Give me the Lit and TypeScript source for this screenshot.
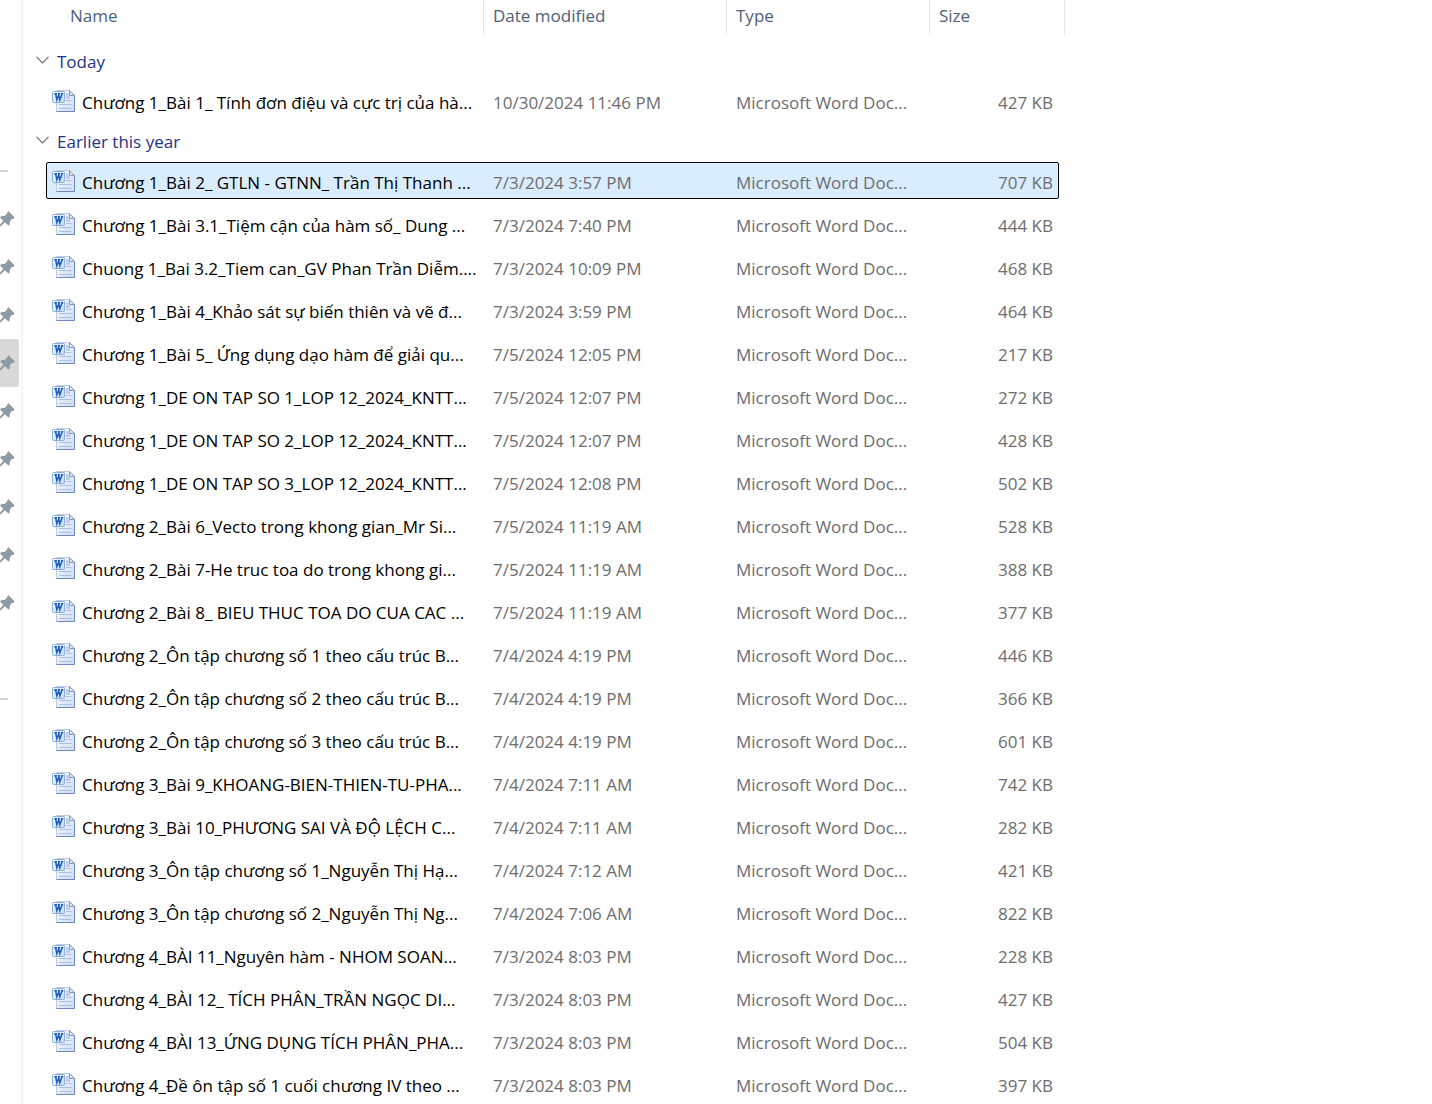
import { LitElement, html, css, svg } from "lit";
import { customElement, property, state } from "lit/decorators.js";
import { classMap } from "lit/directives/class-map.js";

interface FileItem {
  name: string;
  modified: string;
  size: string;
}

interface FileGroup {
  label: string;
  files: FileItem[];
}

const file = (name: string, modified: string, size: string): FileItem => ({ name, modified, size });

const GROUPS: FileGroup[] = [
  {
    label: "Today",
    files: [file("Chương 1_Bài 1_ Tính đơn điệu và cực trị của hà...", "10/30/2024 11:46 PM", "427 KB")],
  },
  {
    label: "Earlier this year",
    files: [
      file("Chương 1_Bài 2_ GTLN - GTNN_ Trần Thị Thanh ...", "7/3/2024 3:57 PM", "707 KB"),
      file("Chương 1_Bài 3.1_Tiệm cận của hàm số_ Dung ...", "7/3/2024 7:40 PM", "444 KB"),
      file("Chuong 1_Bai 3.2_Tiem can_GV Phan Trần Diễm....", "7/3/2024 10:09 PM", "468 KB"),
      file("Chương 1_Bài 4_Khảo sát sự biến thiên và vẽ đ...", "7/3/2024 3:59 PM", "464 KB"),
      file("Chương 1_Bài 5_ Ứng dụng dạo hàm để giải qu...", "7/5/2024 12:05 PM", "217 KB"),
      file("Chương 1_DE ON TAP SO 1_LOP 12_2024_KNTT...", "7/5/2024 12:07 PM", "272 KB"),
      file("Chương 1_DE ON TAP SO 2_LOP 12_2024_KNTT...", "7/5/2024 12:07 PM", "428 KB"),
      file("Chương 1_DE ON TAP SO 3_LOP 12_2024_KNTT...", "7/5/2024 12:08 PM", "502 KB"),
      file("Chương 2_Bài 6_Vecto trong khong gian_Mr Si...", "7/5/2024 11:19 AM", "528 KB"),
      file("Chương 2_Bài 7-He truc toa do trong khong gi...", "7/5/2024 11:19 AM", "388 KB"),
      file("Chương 2_Bài 8_ BIEU THUC TOA DO CUA CAC ...", "7/5/2024 11:19 AM", "377 KB"),
      file("Chương 2_Ôn tập chương số 1 theo cấu trúc B...", "7/4/2024 4:19 PM", "446 KB"),
      file("Chương 2_Ôn tập chương số 2 theo cấu trúc B...", "7/4/2024 4:19 PM", "366 KB"),
      file("Chương 2_Ôn tập chương số 3 theo cấu trúc B...", "7/4/2024 4:19 PM", "601 KB"),
      file("Chương 3_Bài 9_KHOANG-BIEN-THIEN-TU-PHA...", "7/4/2024 7:11 AM", "742 KB"),
      file("Chương 3_Bài 10_PHƯƠNG SAI VÀ ĐỘ LỆCH C...", "7/4/2024 7:11 AM", "282 KB"),
      file("Chương 3_Ôn tập chương số 1_Nguyễn Thị Hạ...", "7/4/2024 7:12 AM", "421 KB"),
      file("Chương 3_Ôn tập chương số 2_Nguyễn Thị Ng...", "7/4/2024 7:06 AM", "822 KB"),
      file("Chương 4_BÀI 11_Nguyên hàm - NHOM SOAN...", "7/3/2024 8:03 PM", "228 KB"),
      file("Chương 4_BÀI 12_ TÍCH PHÂN_TRẦN NGỌC DI...", "7/3/2024 8:03 PM", "427 KB"),
      file("Chương 4_BÀI 13_ỨNG DỤNG TÍCH PHÂN_PHA...", "7/3/2024 8:03 PM", "504 KB"),
      file("Chương 4_Đề ôn tập số 1 cuối chương IV theo ...", "7/3/2024 8:03 PM", "397 KB"),
    ],
  },
];

const PIN_COUNT = 9;

const pinShape = svg`
  <path d="M8.6 0.3 L14.8 6.4 L13.4 8 L12.2 7.8 L9.8 10.6 L9.8 13.2 L8.4 14.4 L4.9 11.2 L0.2 15.8 L-1 14.6 L3.4 9.8 L0 6.6 L1.6 5 L4.6 5 L7.2 2.6 L7.2 1.6 Z" fill="#8f9ba4"/>`;

const wordShape = svg`
  <defs>
    <linearGradient id="page" x1="0" y1="0" x2="1" y2="1">
      <stop offset="0" stop-color="#ffffff"/>
      <stop offset="1" stop-color="#cddaf2"/>
    </linearGradient>
    <linearGradient id="badge" x1="0" y1="0" x2="1" y2="1">
      <stop offset="0" stop-color="#ffffff"/>
      <stop offset="1" stop-color="#b9d8f8"/>
    </linearGradient>
  </defs>
  <path d="M4.5 0.5 H17.5 L22.5 5.5 V21.5 H4.5 Z" fill="url(#page)" stroke="#bccae2"/>
  <path d="M22.5 5.5 V21.5 H4.5" fill="none" stroke="#6c89bd"/>
  <path d="M17.5 0.5 V5.5 H22.5 Z" fill="#dbe5f4" stroke="#8398ba"/>
  <path d="M14 4.5 H16.5 M14 7.5 H18" stroke="#b4c9ea" stroke-width="2.4"/>
  <path d="M14 10.5 H19.5 M7 14.5 H19.5 M7 18.5 H19.5" stroke="#a9bfe4"/>
  <rect x="0.5" y="1.5" width="12" height="11" rx="1" fill="url(#badge)" stroke="#8fadd9"/>
  <path d="M2.2 3.8 H5.2 M6 3.8 H8 M9 3.8 H11.2 M3.7 4 L4.8 9.8 L6.8 4.6 L7.8 9.8 L10 4" fill="none" stroke="#1a5fbe" stroke-width="1.5"/>`;

@customElement("pinned-rail")
export class PinnedRail extends LitElement {
  @state() private current = 3;

  static styles = css`
    :host {
      display: block;
      box-sizing: border-box;
      width: 23px;
      flex: none;
      padding-top: 170px;
      border-right: 2px solid #f5f5f5;
    }
    .divider {
      width: 8px;
      height: 2px;
      margin: 0;
      border: 0;
      background: #d6d6d6;
    }
    .pins {
      margin: 23px 0 71px;
      padding: 0;
      list-style: none;
    }
    .pin {
      display: flex;
      align-items: center;
      width: 19px;
      height: 48px;
      padding: 0;
      border: 0;
      border-radius: 0 2px 2px 0;
      background: none;
    }
    .pin.current {
      background: #d9d9d9;
    }
    .glyph {
      display: block;
      width: 15px;
      height: 16px;
    }
  `;

  render() {
    return html`
      <hr class="divider" />
      <ul class="pins">
        ${Array.from(
          { length: PIN_COUNT },
          (_, i) => html`<li>
            <button
              class=${classMap({ pin: true, current: i === this.current })}
              aria-label="Pinned folder ${i + 1}"
              @click=${() => (this.current = i)}
            >
              <svg class="glyph" viewBox="0 0 15 16" aria-hidden="true">${pinShape}</svg>
            </button>
          </li>`
        )}
      </ul>
      <hr class="divider" />
    `;
  }
}

@customElement("file-list")
export class FileList extends LitElement {
  @property({ attribute: false }) groups: FileGroup[] = [];
  @state() private selected = "1-0";
  @state() private closed: number[] = [];

  static styles = css`
    :host {
      display: block;
      flex: 1;
      min-width: 0;
    }
    table,
    thead,
    tbody {
      display: block;
    }
    table {
      max-width: 1042px;
      color: #6d6d6d;
      font-size: 17px;
      line-height: 24px;
      white-space: nowrap;
    }
    tbody {
      cursor: default;
    }
    thead {
      margin-bottom: 4px;
    }
    th,
    td {
      box-sizing: border-box;
      min-width: 0;
      padding: 0;
      text-align: left;
      font-weight: 400;
    }
    .columns,
    .file {
      display: grid;
      grid-template-columns: 438fr 243fr 203fr 135fr;
    }
    .columns {
      height: 35px;
      margin-left: 23px;
      color: #4c607a;
    }
    .columns th {
      padding: 4px 0 0 9px;
      border-right: 1px solid #e5e5e5;
    }
    .columns .name {
      padding-left: 24px;
    }
    .group {
      display: block;
      height: 43px;
    }
    .group th {
      display: block;
    }
    .toggle {
      display: flex;
      align-items: center;
      gap: 8px;
      padding: 11px 0 8px 13px;
      border: 0;
      background: none;
      color: #1e3287;
      font: inherit;
    }
    .chevron {
      width: 13px;
      height: 8px;
      margin-bottom: 4px;
    }
    .chevron.closed {
      transform: rotate(-90deg);
    }
    .file {
      position: relative;
      height: 37px;
      margin: 0 0 6px 23px;
    }
    .file:last-child {
      margin-bottom: 0;
    }
    .file td {
      z-index: 1;
      padding: 9px 0 0 9px;
    }
    .file .name {
      display: flex;
      gap: 6px;
      padding: 8px 0 0 6px;
      color: #000;
      line-height: 26px;
    }
    .file .size {
      padding-right: 12px;
      text-align: right;
    }
    .file.selected::before {
      content: "";
      position: absolute;
      inset: 0 6px 0 0;
      border: 1px solid #000;
      border-radius: 2px;
      background: #d9edff;
    }
    .icon {
      flex: none;
      width: 24px;
      height: 22px;
    }
  `;

  private toggle(index: number) {
    this.closed = this.closed.includes(index)
      ? this.closed.filter((i) => i !== index)
      : [...this.closed, index];
  }

  private renderFile(item: FileItem, key: string) {
    return html`<tr
      class=${classMap({ file: true, selected: key === this.selected })}
      @click=${() => (this.selected = key)}
    >
      <td class="name">
        <svg class="icon" viewBox="0 0 24 22" aria-hidden="true">${wordShape}</svg>
        <span>${item.name}</span>
      </td>
      <td>${item.modified}</td>
      <td>Microsoft Word Doc...</td>
      <td class="size">${item.size}</td>
    </tr>`;
  }

  render() {
    return html`<table>
      <thead>
        <tr class="columns">
          <th class="name" scope="col">Name</th>
          <th scope="col">Date modified</th>
          <th scope="col">Type</th>
          <th scope="col">Size</th>
        </tr>
      </thead>
      ${this.groups.map((group, g) => {
        const closed = this.closed.includes(g);
        return html`<tbody>
          <tr class="group">
            <th colspan="4" scope="rowgroup">
              <button class="toggle" aria-expanded=${closed ? "false" : "true"} @click=${() => this.toggle(g)}>
                <svg class=${classMap({ chevron: true, closed })} viewBox="0 0 13 8" aria-hidden="true">
                  <path d="M0.5 0.8 L6.5 6.8 L12.5 0.8" fill="none" stroke="#6e6e6e" stroke-width="1.2" />
                </svg>
                ${group.label}
              </button>
            </th>
          </tr>
          ${closed ? null : group.files.map((item, i) => this.renderFile(item, `${g}-${i}`))}
        </tbody>`;
      })}
    </table>`;
  }
}

@customElement("app-root")
export class AppRoot extends LitElement {
  static styles = css`
    :host {
      display: flex;
      height: 100vh;
      overflow: hidden;
      background: #fff;
      font-family: "Segoe UI", "Open Sans", "Noto Sans", sans-serif;
    }
  `;

  render() {
    return html`
      <pinned-rail></pinned-rail>
      <file-list .groups=${GROUPS}></file-list>
    `;
  }
}
